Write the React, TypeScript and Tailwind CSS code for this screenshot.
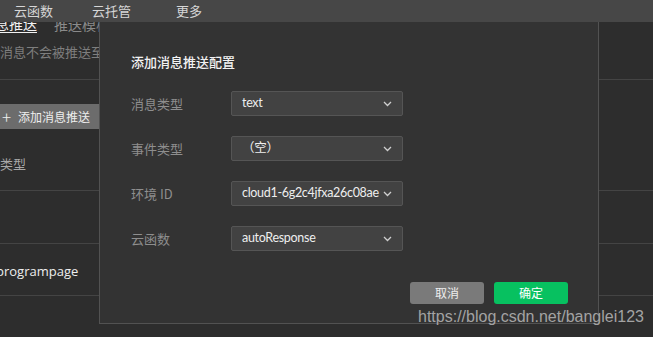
import React from "react";

const cjk = { fontFamily: '"Noto Sans CJK SC", "Noto Sans", sans-serif' };
const latin = { fontFamily: 'Lato, "Noto Sans CJK SC", sans-serif' };

function Chevron() {
  return (
    <svg width="9" height="6" viewBox="0 0 9 6" className="shrink-0">
      <path d="M1 1 L4.5 4.5 L8 1" fill="none" stroke="#cfcfcf" strokeWidth="1.3" />
    </svg>
  );
}

function Select({ value }: { value: string }) {
  return (
    <div className="w-[172px] h-[25px] bg-[#424242] border border-[#555555] rounded-[2px] flex items-center pl-[10px] pr-[10px] justify-between">
      <span className="text-[12.5px] tracking-[-0.3px] text-[#eeeeee] whitespace-nowrap leading-none" style={latin}>{value}</span>
      <Chevron />
    </div>
  );
}

function Row({ label, value }: { label: string; value: string }) {
  return (
    <div className="flex items-center h-[25px]">
      <div className="w-[100px] text-[13px] text-[#8e8e8e]">{label}</div>
      <Select value={value} />
    </div>
  );
}

export default function App() {
  return (
    <div className="relative w-[653px] h-[337px] overflow-hidden bg-[#2d2d2d]" style={cjk}>
      {/* top bar */}
      <div className="relative z-10 h-[22px] bg-[#474747] flex items-center text-[13px] text-[#d6d6d6]">
        <span className="ml-[14px]">云函数</span>
        <span className="ml-[39px]">云托管</span>
        <span className="ml-[45px]">更多</span>
      </div>

      {/* background content */}
      <div className="-mt-[9px]">
        <div className="flex items-end h-[20px] text-[14px] leading-[18px]">
          <span className="-ml-[19px] text-[#f2f2f2] border-b border-[#f2f2f2]">消息推送</span>
          <span className="ml-[17px] text-[#8a8a8a]">推送模板</span>
        </div>
        <div className="mt-[11px] h-[16px] text-[13px] leading-[16px] text-[#7e7e7e] whitespace-nowrap">消息不会被推送至</div>
        <div className="mt-[19px] border-b border-[#444444]" />
        <div className="mt-[24px] w-[99px] h-[25px] bg-[#6c6c6c] flex items-center text-[12px] text-[#eeeeee]">
          <span className="ml-[2px] text-[17px] leading-none font-light">+</span>
          <span className="ml-[7px]">添加消息推送</span>
        </div>
        <div className="mt-[27px] h-[16px] text-[13px] leading-[16px] text-[#a8a8a8]">类型</div>
        <div className="mt-[18px] border-b border-[#444444]" />
        <div className="mt-[52px] border-b border-[#444444]" />
        <div className="mt-[19px] h-[16px] text-[13px] leading-[16px] text-[#eeeeee] -ml-[4px]" style={{ fontFamily: '"Open Sans", sans-serif' }}>
          programpage
        </div>
        <div className="mt-[16px] border-b border-[#444444]" />
      </div>

      {/* modal */}
      <div className="absolute z-20 left-[99px] top-[22px] w-[500px] h-[302px] bg-[#333333] border-l border-r border-b border-[#525252] pl-[31px] pr-[30px] pt-[31px] flex flex-col">
        <div className="text-[13px] leading-[18px] text-[#f2f2f2] font-medium">添加消息推送配置</div>
        <div className="mt-[20px] flex flex-col gap-[20px]">
          <Row label="消息类型" value="text" />
          <Row label="事件类型" value="（空）" />
          <Row label="环境 ID" value="cloud1-6g2c4jfxa26c08ae" />
          <Row label="云函数" value="autoResponse" />
        </div>
        <div className="mt-[31px] flex justify-end gap-[10px]">
          <div className="w-[74px] h-[22px] bg-[#7a7a7a] rounded-[3px] flex items-center justify-center text-[12px] text-[#eeeeee]">取消</div>
          <div className="w-[74px] h-[22px] bg-[#07c160] rounded-[3px] flex items-center justify-center text-[12px] text-white">确定</div>
        </div>
      </div>

      {/* watermark */}
      <div
        className="absolute z-30 left-[418px] top-[307px] text-[16px] leading-[20px] text-[#a3a3a3]"
        style={{ fontFamily: '"Liberation Sans", Arial, sans-serif' }}
      >
        https://blog.csdn.net/banglei123
      </div>
    </div>
  );
}
